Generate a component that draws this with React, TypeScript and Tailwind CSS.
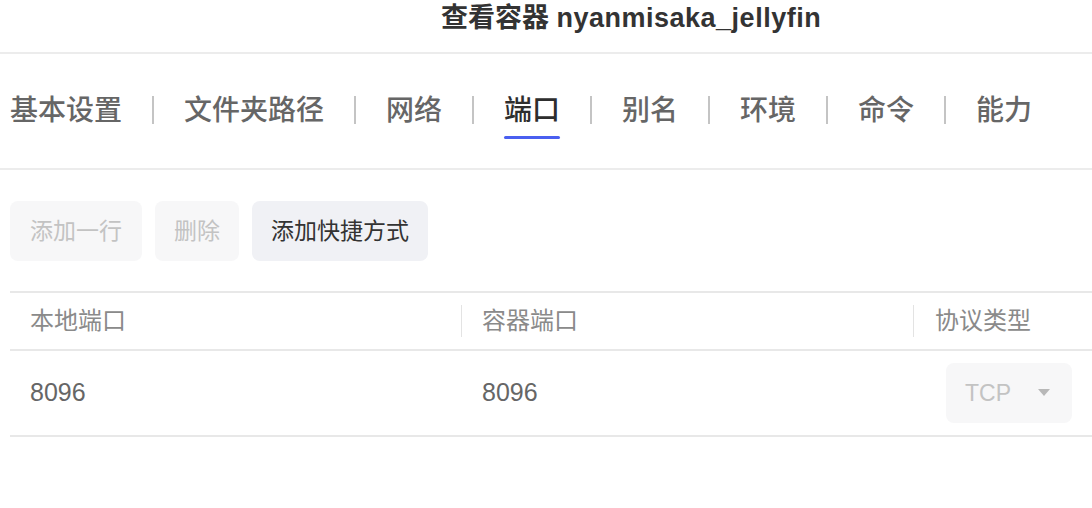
import React from "react";

const FONT = '"Liberation Sans", "Noto Sans CJK SC", sans-serif';

const tabs = ["基本设置", "文件夹路径", "网络", "端口", "别名", "环境", "命令", "能力"];

export default function App() {
  return (
    <div className="w-[1092px] h-[508px] bg-white overflow-hidden" style={{ fontFamily: FONT }}>
      {/* Header */}
      <div className="h-[54px] border-b-2 border-[#ececec] pl-[441px]">
        <div className="text-[27px] leading-[36px] font-semibold text-[#333] whitespace-nowrap">
          查看容器 <span className="tracking-[0.5px]">nyanmisaka_jellyfin</span>
        </div>
      </div>

      {/* Tabs */}
      <div className="h-[116px] border-b-2 border-[#ececec] pl-[10px] pt-[37px] flex items-start">
        {tabs.map((t, i) => (
          <React.Fragment key={t}>
            {i > 0 && <div className="mx-[30px] mt-[5px] w-[2px] h-[28px] bg-[#c4c4c4]" />}
            <div className="flex flex-col items-center">
              <div
                className={
                  "text-[28px] leading-[40px] font-medium whitespace-nowrap " +
                  (t === "端口" ? "text-[#2e2e2e]" : "text-[#666]")
                }
              >
                {t}
              </div>
              {t === "端口" && <div className="mt-[5px] w-[56px] h-[3px] rounded-full bg-[#4a5ff0]" />}
            </div>
          </React.Fragment>
        ))}
      </div>

      {/* Toolbar */}
      <div className="pl-[10px] pt-[31px] flex gap-[13px]">
        <div className="h-[60px] px-[20px] rounded-[8px] bg-[#f7f7f8] text-[#c3c3c3] text-[23px] flex items-center whitespace-nowrap">
          添加一行
        </div>
        <div className="h-[60px] px-[19px] rounded-[8px] bg-[#f7f7f8] text-[#c3c3c3] text-[23px] flex items-center whitespace-nowrap">
          删除
        </div>
        <div className="h-[60px] px-[19px] rounded-[8px] bg-[#f0f1f5] text-[#333] text-[23px] flex items-center whitespace-nowrap">
          添加快捷方式
        </div>
      </div>

      {/* Table */}
      <div className="ml-[10px] mt-[30px] w-[1090px]">
        <div className="h-[60px] border-y-2 border-[#e8e8e8] flex items-center text-[24px] text-[#8a8a8a]">
          <div className="w-[451px] pl-[20px]">本地端口</div>
          <div className="w-[1px] h-[32px] bg-[#e3e3e3]" />
          <div className="w-[451px] pl-[20px]">容器端口</div>
          <div className="w-[1px] h-[32px] bg-[#e3e3e3]" />
          <div className="flex-1 pl-[21px]">协议类型</div>
        </div>
        <div className="h-[86px] border-b-2 border-[#e8e8e8] flex items-center text-[25px] text-[#666]">
          <div className="w-[452px] pl-[20px]">8096</div>
          <div className="w-[452px] pl-[20px]">8096</div>
          <div className="flex-1 pl-[32px]">
            <div className="w-[126px] h-[60px] rounded-[8px] bg-[#f7f7f8] flex items-center pl-[19px] pr-[22px] justify-between">
              <span className="text-[23px] text-[#c3c3c3]">TCP</span>
              <svg width="12" height="8" viewBox="0 0 12 8">
                <path d="M0 0 L12 0 L6 7 Z" fill="#b8b8b8" />
              </svg>
            </div>
          </div>
        </div>
      </div>
    </div>
  );
}
